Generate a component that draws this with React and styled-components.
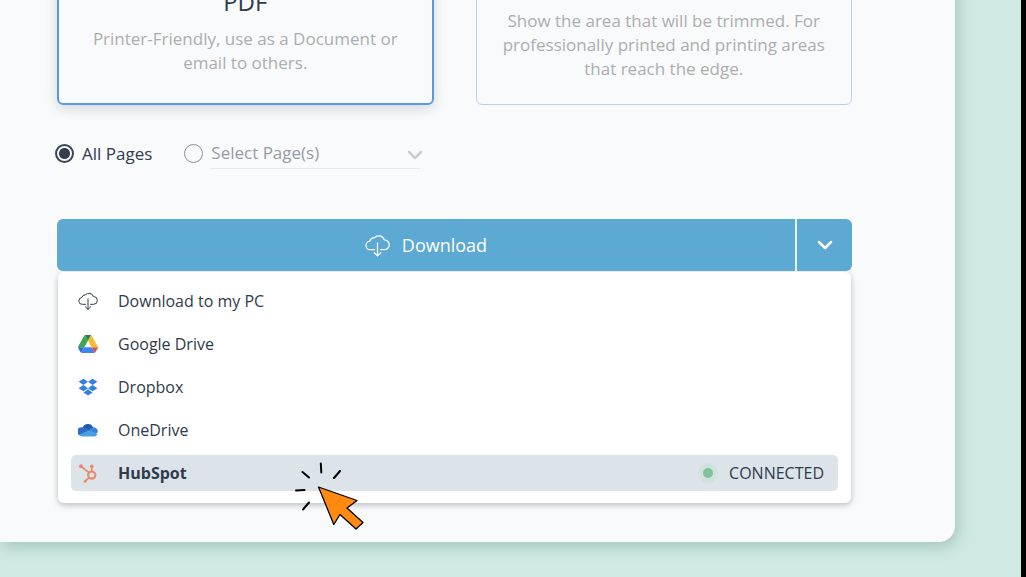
import React, { useState } from 'react';
import styled, { createGlobalStyle, css } from 'styled-components';

const GlobalStyle = createGlobalStyle`
    * {
        box-sizing: border-box;
    }
    body {
        margin: 0;
        background-color: #cfeae4;
        font-family: 'Open Sans', 'Noto Sans', sans-serif;
        color: #2f3b4c;
    }
    button {
        font-family: inherit;
        color: inherit;
        border: none;
        background: none;
        padding: 0;
        cursor: pointer;
    }
`
const Stage = styled.div`
    display: flex;
    flex-direction: column;
    justify-content: flex-end;
    height: 100vh;
    padding: 0 66px 35px 0;
    border-right: 5px solid #000;
    overflow: hidden;
`
const Panel = styled.main`
    padding: 40px 103px 39px 57px;
    background-color: #f9fafc;
    border-radius: 0 0 16px 0;
    box-shadow: 2px 4px 16px rgba(40,90,80,.28);
`
const Formats = styled.div`
    display: grid;
    grid-template-columns: 1fr 1fr;
    gap: 42px;
`
const FormatCard = styled.section`
    height: 180px;
    padding: 0 24px 23px;
    display: flex;
    flex-direction: column;
    justify-content: flex-end;
    text-align: center;
    border: 1px solid #c3d0e4;
    border-radius: 6px;
    ${props => props.$active && css`
        padding-bottom: 28px;
        border: 2px solid #5a97e6;
        box-shadow: 0 4px 14px rgba(0,0,0,.14);
    `}
`
const FormatTitle = styled.h2`
    margin: 0 0 9px;
    font-size: 24px;
    font-weight: 400;
    line-height: 32px;
`
const FormatText = styled.p`
    margin: 0;
    font-size: 17px;
    line-height: 24px;
    color: #adadad;
`
const PageChoice = styled.div`
    display: flex;
    align-items: center;
    height: 32px;
    margin: 32px 0 50px;
    font-size: 17px;
`
const Radio = styled.input`
    appearance: none;
    flex: none;
    width: 19px;
    height: 19px;
    margin: 0 8px 0 -2px;
    border: 1px solid #8b929b;
    border-radius: 50%;
    &:checked {
        border: 2px solid #3b4655;
        background: radial-gradient(circle, #333e4e 5px, transparent 6px);
    }
`
const RadioLabel = styled.label`
    display: flex;
    align-items: center;
    margin-right: 34px;
`
const SelectWrap = styled.div`
    display: flex;
    align-items: center;
    width: 209px;
    height: 32px;
    border-bottom: 1px solid #e6e8eb;
`
const PageSelect = styled.select`
    appearance: none;
    flex: 1;
    padding: 0;
    border: none;
    background: none;
    font: inherit;
    color: #969ca5;
`
const SelectArrow = styled.span`
    display: flex;
    margin: 4px -3px 0 0;
    color: #c9cdd2;
    pointer-events: none;
`
const SplitButton = styled.div`
    display: flex;
    height: 52px;
    border-radius: 6px;
    overflow: hidden;
    color: #fff;
`
const DownloadButton = styled.button`
    display: flex;
    flex: 1;
    align-items: center;
    justify-content: center;
    gap: 12px;
    font-size: 18px;
    background-color: #5ca9d3;
`
const ToggleButton = styled.button`
    display: flex;
    align-items: center;
    justify-content: center;
    width: 57px;
    border-left: 2px solid #e4f3fa;
    background-color: #5ca9d3;
`
const Menu = styled.ul`
    margin: 1px 1px 0;
    padding: 11px 13px 12px;
    list-style: none;
    background-color: #fff;
    border-radius: 6px;
    box-shadow: 0 2px 6px rgba(0,0,0,.25);
`
const MenuItem = styled.li`
    display: flex;
    & + & {
        margin-top: 7px;
    }
`
const MenuButton = styled.button`
    display: flex;
    flex: 1;
    align-items: center;
    height: 36px;
    padding: 0 14px 0 7px;
    border-radius: 5px;
    font-size: 16px;
    font-weight: ${props => props.$active ? 700 : 400};
    background-color: ${props => props.$active ? '#dce3e9' : 'transparent'};
    svg {
        width: 20px;
        height: 20px;
        margin-right: 20px;
    }
`
const Status = styled.span`
    display: flex;
    align-items: center;
    gap: 16px;
    margin-left: auto;
    font-weight: 400;
`
const Dot = styled.span`
    width: 10px;
    height: 10px;
    border-radius: 50%;
    background-color: #7fc29b;
    box-shadow: 0 0 0 5px #d0e2dd;
`
// click marker lies over the menu
const Pointer = styled.svg`
    position: absolute;
    left: 292px;
    top: 460px;
    pointer-events: none;
`

const CloudIcon = ({ size = 20 }) => (
    <svg width={size} height={size} viewBox="0 0 24 24" fill="none" stroke="currentColor" strokeWidth="1.2" strokeLinecap="round" strokeLinejoin="round">
        <path d="M9 16H5.400A4.100 4.100 0 0 1 4.700 7.800 4 4 0 0 1 9 4.600 5.600 5.600 0 0 1 18.500 6.600 4.700 4.700 0 0 1 18.600 16H15.200" />
        <path d="M12 9.500v12.500M8.800 18.900 12 22l3.200-3.100" />
    </svg>
)

const DriveIcon = () => (
    <svg viewBox="0 0 87.3 78">
        <path d="m6.600 66.850 3.850 6.650c.8 1.400 1.950 2.500 3.300 3.300l13.750-23.800H0c0 1.550.4 3.100 1.200 4.500z" fill="#2b6bd8" />
        <path d="M43.650 25 29.900 1.200c-1.350.8-2.500 1.900-3.300 3.300L1.200 48.500A9.060 9.060 0 0 0 0 53h27.500z" fill="#3da555" />
        <path d="M73.550 76.800c1.350-.8 2.500-1.900 3.300-3.300l1.600-2.750 7.650-13.250c.8-1.400 1.200-2.950 1.200-4.500H59.800l5.850 11.500z" fill="#e0533f" />
        <path d="M43.650 25 57.400 1.200C56.050.4 54.500 0 52.900 0H34.400c-1.600 0-3.150.45-4.500 1.200z" fill="#2c8240" />
        <path d="M59.800 53H27.500L13.750 76.800c1.350.8 2.900 1.200 4.500 1.200h50.800c1.600 0 3.150-.45 4.500-1.200z" fill="#4284ee" />
        <path d="M73.400 26.500 60.700 4.500c-.8-1.400-1.950-2.500-3.300-3.300L43.650 25 59.800 53h27.450c0-1.550-.4-3.100-1.200-4.500z" fill="#f5bd3b" />
    </svg>
)

const DropboxIcon = () => (
    <svg viewBox="0 0 24 24" fill="#357fe0">
        <path d="M6.500 2 .7 5.800l5.800 3.800L12 5.800zM17.500 2 12 5.800l5.500 3.800 5.800-3.800zM6.500 9.600.7 13.400l5.800 3.800 5.500-3.800zM17.500 9.600 12 13.400l5.500 3.800 5.800-3.800zM12 14.800l-5.500 3.700L12 22.300l5.500-3.800z" />
    </svg>
)

const OneDriveIcon = () => (
    <svg viewBox="0 0 24 24">
        <path d="M5.500 10a6.600 6.600 0 0 1 12.500-1.300L19 13l-9 3z" fill="#2059ad" />
        <path d="M5.500 8.800a6 6 0 0 1 4.800.9l9.200 7.500-17 1.500A5 5 0 0 1 5.500 8.800z" fill="#2c6ec7" />
        <path d="M13.500 12.200a6 6 0 0 1 5.300-3.600A5.200 5.200 0 0 1 23.600 15l-3.600 2z" fill="#3585d8" />
        <path d="M1.500 17.500 13.500 12.200l9.900 5a4.200 4.200 0 0 1-3.700 2.600H5.300a4.600 4.600 0 0 1-3.800-2.300z" fill="#4c9ee3" />
    </svg>
)

const HubSpotIcon = () => (
    <svg viewBox="0 0 24 24" fill="none" stroke="#ea8870" strokeWidth="2">
        <circle cx="16.500" cy="14.500" r="4.300" strokeWidth="2.600" />
        <path d="M16.500 10V5M13.200 11.500 4 4.200M13.400 17.600 9 21.500" />
        <g fill="#ea8870" stroke="none">
            <circle cx="3.600" cy="3.900" r="2.300" />
            <circle cx="16.500" cy="4" r="2.200" />
            <circle cx="8.600" cy="21.800" r="1.800" />
        </g>
    </svg>
)

const Chevron = () => (
    <svg width="16" height="12" viewBox="0 0 16 12" fill="none" stroke="currentColor" strokeWidth="2.500" strokeLinecap="round" strokeLinejoin="round">
        <path d="m2 3 6 6 6-6" />
    </svg>
)

const targets = [
    { name: 'Download to my PC', Icon: CloudIcon },
    { name: 'Google Drive', Icon: DriveIcon },
    { name: 'Dropbox', Icon: DropboxIcon },
    { name: 'OneDrive', Icon: OneDriveIcon },
    { name: 'HubSpot', Icon: HubSpotIcon, connected: true }
]

function App() {
    const [pages, setPages] = useState('all');
    const [open, setOpen] = useState(true);

    return (
        <Stage>
            <GlobalStyle />
            <Panel>
                <Formats>
                    <FormatCard $active>
                        <FormatTitle>PDF</FormatTitle>
                        <FormatText>Printer-Friendly, use as a Document or email to others.</FormatText>
                    </FormatCard>
                    <FormatCard>
                        <FormatText>Show the area that will be trimmed. For professionally printed and printing areas that reach the edge.</FormatText>
                    </FormatCard>
                </Formats>
                <PageChoice>
                    <RadioLabel>
                        <Radio type="radio" name="pages" checked={pages === 'all'} onChange={() => setPages('all')} />
                        All Pages
                    </RadioLabel>
                    <Radio type="radio" name="pages" aria-label="Select Page(s)" checked={pages === 'some'} onChange={() => setPages('some')} />
                    <SelectWrap>
                        <PageSelect aria-label="Pages">
                            <option>Select Page(s)</option>
                        </PageSelect>
                        <SelectArrow><Chevron /></SelectArrow>
                    </SelectWrap>
                </PageChoice>
                <SplitButton>
                    <DownloadButton>
                        <CloudIcon size={25} />
                        Download
                    </DownloadButton>
                    <ToggleButton aria-label="More destinations" aria-expanded={open} onClick={() => setOpen(!open)}>
                        <Chevron />
                    </ToggleButton>
                </SplitButton>
                {open && (
                    <Menu>
                        {targets.map(({ name, Icon, connected }) => (
                            <MenuItem key={name}>
                                <MenuButton $active={connected}>
                                    <Icon />
                                    {name}
                                    {connected && <Status><Dot />CONNECTED</Status>}
                                </MenuButton>
                            </MenuItem>
                        ))}
                    </Menu>
                )}
            </Panel>
            <Pointer width="76" height="72" viewBox="0 0 76 72" fill="none" stroke="#000" strokeWidth="2" strokeLinecap="round">
                <path d="m10.500 12 6.500 5.500M28.800 3.500l.5 9M48 11l-6 7M4 30.500l8.500-.5M17 42.500l-6 7" />
                <path d="M26.500 27 65 40.500 55 48l16 14.500-7 6.500L48 54.500l-6.200 10z" fill="#ff8a12" strokeWidth="1.300" strokeLinejoin="round" />
            </Pointer>
        </Stage>
    );
}

export default App;
